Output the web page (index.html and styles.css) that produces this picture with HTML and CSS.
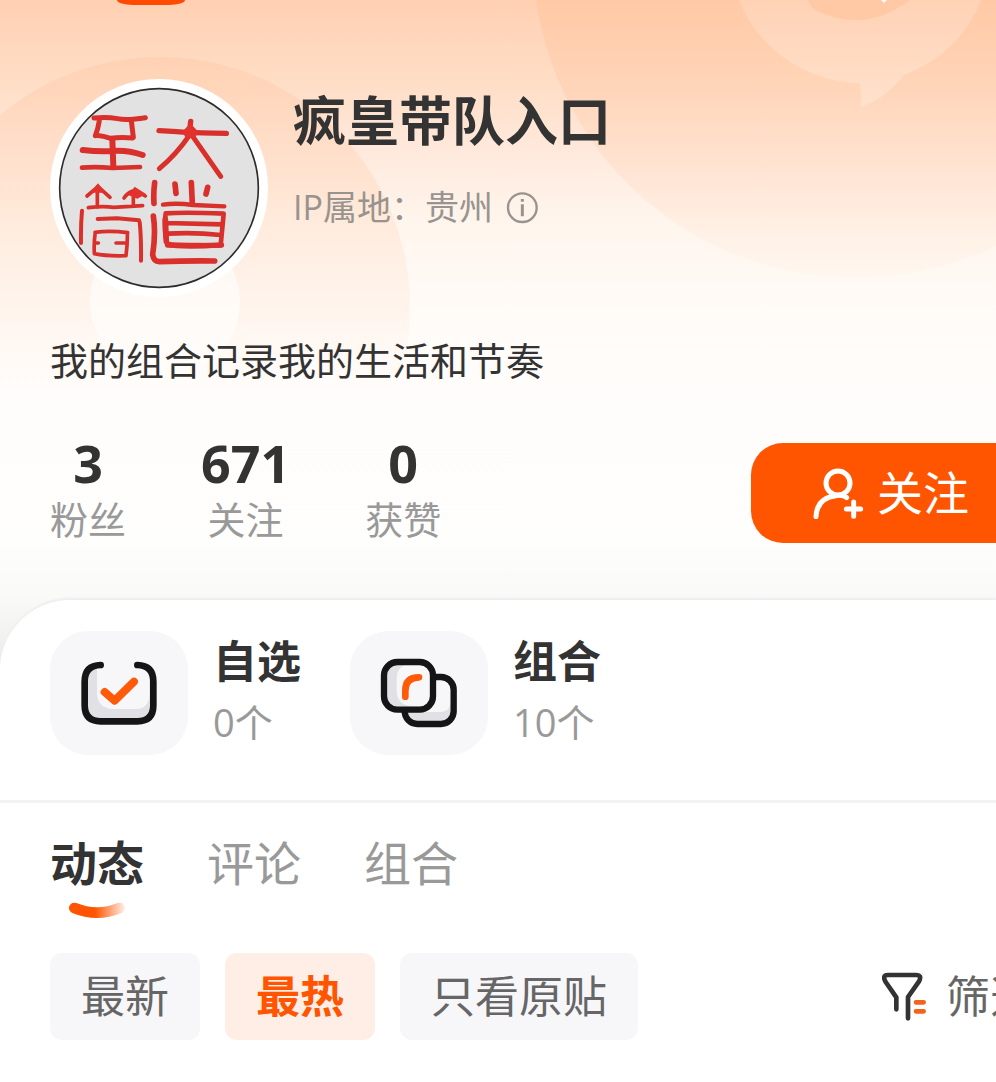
FILE: index.html
```html
<!DOCTYPE html>
<html lang="zh-CN">
<head>
<meta charset="utf-8">
<meta name="viewport" content="width=device-width, initial-scale=1">
<title>疯皇带队入口</title>
<link rel="stylesheet" href="styles.css">
</head>
<body>
<main class="page">
  <header class="hero">
    <svg class="art art-left" width="420" height="600" viewBox="0 0 420 600" aria-hidden="true">
      <defs>
        <linearGradient id="ring" gradientUnits="userSpaceOnUse" x1="0" y1="57" x2="0" y2="400">
          <stop offset="0" stop-color="#ffcbaa" stop-opacity=".55"/>
          <stop offset=".4" stop-color="#ffd6ba" stop-opacity=".4"/>
          <stop offset=".75" stop-color="#ffe6d6" stop-opacity=".3"/>
          <stop offset="1" stop-color="#fff3ea" stop-opacity="0"/>
        </linearGradient>
      </defs>
      <path fill="url(#ring)" fill-rule="evenodd" d="M160 57a250 250 0 1 1 0 500a250 250 0 1 1 0-500zM165 227a75 75 0 1 0 0 150a75 75 0 1 0 0-150z"/>
    </svg>
    <svg class="art art-right" width="460" height="300" viewBox="536 0 460 300" aria-hidden="true">
      <defs>
        <linearGradient id="disc" gradientUnits="userSpaceOnUse" x1="0" y1="0" x2="0" y2="280">
          <stop offset="0" stop-color="#ffc9a5"/>
          <stop offset=".32" stop-color="#ffd5b9"/>
          <stop offset=".64" stop-color="#ffe6d6"/>
          <stop offset=".86" stop-color="#fff2e7"/>
          <stop offset="1" stop-color="#fff7f0"/>
        </linearGradient>
        <linearGradient id="bubble" gradientUnits="userSpaceOnUse" x1="0" y1="0" x2="0" y2="107">
          <stop offset="0" stop-color="#ffd2b5"/>
          <stop offset="1" stop-color="#ffe1cc"/>
        </linearGradient>
      </defs>
      <circle cx="856" cy="-45" r="323" fill="url(#disc)"/>
      <path fill="url(#bubble)" d="M739 0C756 45 803 82 859 83q2 1 2 24q25-9 43-32q57-22 77-75z"/>
      <path fill="#ffc9a5" d="M808 0q3 8 7 10q19 10 41 10q27 0 54-20z"/>
      <path fill="#fff" d="M881 0h6l-3 3z"/>
    </svg>
    <div class="badge"></div>
    <section class="profile">
      <svg class="avatar" viewBox="30 27 654 654" role="img" aria-label="头像">
        <circle cx="357" cy="354" r="327" fill="#fff"/>
        <circle cx="357" cy="354" r="298" fill="#e2e2e2" stroke="#2d2b2c" stroke-width="5"/>
        <g fill="none" stroke="#d9302c" stroke-linecap="round" stroke-linejoin="round">
          <path stroke-width="15" d="M162 144q40-4 70 2t84-3M178 152q-4 26-12 45M169 196q22 2 43 9q32-5 66-1M274 152l6 50"/>
          <path stroke-width="18" d="M217 208l3 82M128 240q50 6 92 3t88 12"/>
          <path stroke-width="14" d="M126 293q40-4 92 1l82-3"/>
          <path stroke-width="16" d="M357 182q60 4 88 5t114 3M452 154q-3 20-2 36"/>
          <path stroke-width="15" d="M448 196q-38 56-90 100M456 196l86 123"/>
          <path stroke-width="11" d="M172 350v62M174 350l-33 28M174 350l36 32M284 362q-20 4-32 22M286 362l30 16M280 362v44M145 413q44-6 76-1l87-5"/>
          <path stroke-width="12" d="M126 422q-4 45-3 97M173 447l58-2l66 6M299 456q5 46 4 116"/>
          <path stroke-width="11" d="M165 487q45-6 98 1M166 487q-5 30-3 64q38 8 95 6q5-38 4-69M165 519h10M228 519h30"/>
          <path stroke-width="17" d="M344 338q-4 30-2 62M340 438q8 50-2 116q3 21 20 21q80-3 166-2"/>
          <path stroke-width="17" d="M405 342l3 28M454 338l3 64M503 352l-5 20"/>
          <path stroke-width="13" d="M369 404q40-6 90 1l94 4"/>
          <path stroke-width="14" d="M377 430q60-4 174 1l-9 95q-86-2-160 0q-12-45-5-96M380 459l164 4M382 491q80-5 160 4"/>
          <path stroke-width="17" d="M384 523q34 8 160 2M376 448l3 66"/>
        </g>
        <path fill="#e3312b" d="M451 160l24 25l-10 18h-28l-10-18zM174 340l22 28h-44zM284 350l34 22-26 14-26-10z"/>
      </svg>
      <div class="identity">
        <h1 class="name">疯皇带队入口</h1>
        <p class="location">IP属地：贵州
          <svg class="info" viewBox="678 336 99 99" fill="none" stroke="#999390" role="img" aria-label="说明">
            <circle cx="727" cy="386" r="43" stroke-width="7"/>
            <path stroke-width="9" d="M727 376v36M727 360v8"/>
          </svg>
        </p>
      </div>
    </section>
    <p class="bio">我的组合记录我的生活和节奏</p>
    <section class="summary">
      <dl class="stats">
        <div class="stat"><dt>粉丝</dt><dd>3</dd></div>
        <div class="stat"><dt>关注</dt><dd>671</dd></div>
        <div class="stat"><dt>获赞</dt><dd>0</dd></div>
      </dl>
      <button class="follow" type="button">
        <svg class="follow-icon" viewBox="246 108 156 156" fill="none" stroke="#fff" stroke-width="15" stroke-linecap="round" aria-hidden="true">
          <circle cx="324" cy="156" r="36"/>
          <path d="M258 257q3-57 60-63q21-4 32 6M349 234h43M371 213v43"/>
        </svg>
        <span class="label">关注</span>
      </button>
    </section>
  </header>

  <section class="sheet">
    <div class="lists">
      <a class="list" href="#watch">
        <span class="tile">
          <svg width="78" height="66" viewBox="240 240 234 198" fill="none" stroke-linecap="round" stroke-linejoin="round" aria-hidden="true">
            <rect x="256" y="256" width="204" height="168" rx="42" fill="#e1e1e5"/>
            <path fill="#f7f7fa" d="M291 240h157v107q-3 40-42 40h-70q-45-5-45-48z"/>
            <path stroke="#151515" stroke-width="20" d="M302 255q-48 1-48 50v71q0 48 48 48h110q48 0 48-48v-71q0-49-48-50"/>
            <path stroke="#ff5a08" stroke-width="24" d="M314 336l30 26l58-57"/>
          </svg>
        </span>
        <span class="list-text"><strong>自选</strong><small>0个</small></span>
      </a>
      <a class="list" href="#portfolio">
        <span class="tile">
          <svg width="78" height="70" viewBox="150 174 234 210" fill="none" stroke-linecap="round" aria-hidden="true">
            <rect x="224" y="231" width="147" height="141" rx="38" fill="#e1e1e5"/>
            <path fill="#f7f7fa" d="M300 231h35q28 0 28 32v38q0 35-35 35h-55z"/>
            <rect x="224" y="231" width="147" height="141" rx="38" stroke="#151515" stroke-width="19"/>
            <rect x="162" y="186" width="147" height="143" rx="40" fill="#e1e1e5"/>
            <path fill="#f7f7fa" d="M240 190h30q30 0 30 36v92h-55q-45-3-45-48v-38q3-36 40-42z"/>
            <rect x="162" y="186" width="147" height="143" rx="40" stroke="#151515" stroke-width="19"/>
            <path stroke="#ff5a08" stroke-width="20" d="M226 290v-18q0-40 41-40"/>
          </svg>
        </span>
        <span class="list-text"><strong>组合</strong><small>10个</small></span>
      </a>
    </div>

    <nav class="tabs">
      <a class="tab tab-active" href="#feed">动态
        <svg class="smile" viewBox="114 246 174 51" fill="none" aria-hidden="true">
          <defs>
            <linearGradient id="fade" gradientUnits="userSpaceOnUse" x1="195" y1="0" x2="286" y2="0">
              <stop offset="0" stop-color="#ff5500"/>
              <stop offset="1" stop-color="#ff5500" stop-opacity=".08"/>
            </linearGradient>
          </defs>
          <path stroke="url(#fade)" stroke-width="32" stroke-linecap="round" d="M133 264q68 28 136 0"/>
        </svg>
      </a>
      <a class="tab" href="#comments">评论</a>
      <a class="tab" href="#groups">组合</a>
    </nav>

    <div class="filters">
      <button class="chip" type="button"><span class="label">最新</span></button>
      <button class="chip chip-active" type="button"><span class="label">最热</span></button>
      <button class="chip" type="button"><span class="label">只看原贴</span></button>
      <button class="filter" type="button">
        <svg class="filter-icon" viewBox="96 96 135 147" fill="none" stroke-linecap="round" stroke-linejoin="round" aria-hidden="true">
          <path stroke="#333" stroke-width="14" d="M139 208v-36l-32-46q-12-21 7-21h84q19 0 9 19l-33 47v64"/>
          <path stroke="#f26419" stroke-width="14" d="M198 187h23M198 214h23"/>
        </svg>
        <span class="label">筛选</span>
      </button>
    </div>
  </section>
</main>
</body>
</html>
```
FILE: styles.css
```css
* {
  box-sizing: border-box;
}

body,
h1,
p,
dl,
dd {
  margin: 0;
}

body {
  background: #fff;
  color: #333;
  font-family: "Open Sans", "Noto Sans CJK SC", sans-serif;
}

button {
  border: 0;
  font-family: inherit;
  white-space: nowrap;
  cursor: pointer;
}

a {
  color: inherit;
  text-decoration: none;
}

.page {
  min-height: 100vh;
  overflow: hidden;
}

.hero {
  position: relative;
  padding: 0 0 193px 50px;
  background:
    linear-gradient(to top, rgba(0, 0, 0, .08), rgba(0, 0, 0, .02) 70px, transparent 130px),
    linear-gradient(#ffd0b2 0, #ffddc5 80px, #ffe9dc 150px, #fff5ec 220px, #fffaf6 290px, #fffdfb 400px, #fefefd 560px);
}

.art {
  position: absolute;
  top: 0;
}

.art-left {
  left: 0;
}

.art-right {
  right: 0;
}

.badge {
  width: 68px;
  height: 5px;
  margin-left: 67px;
  border-radius: 0 0 16px 16px / 0 0 5px 5px;
  background: #ff4a00;
}

.profile {
  position: relative;
  display: flex;
  gap: 25px;
  margin-top: 74px;
}

.avatar {
  flex: none;
  width: 218px;
  height: 218px;
}

.identity {
  padding-top: 10px;
}

.name {
  font-size: 53px;
  font-weight: 700;
  line-height: 64px;
}

.location {
  display: flex;
  align-items: center;
  gap: 13px;
  margin-top: 30px;
  color: #999390;
  font-size: 34px;
  line-height: 48px;
}

.info {
  width: 33px;
  height: 33px;
}

.bio {
  position: relative;
  margin-top: 35px;
  font-size: 38px;
  line-height: 56px;
}

.summary {
  position: relative;
  display: flex;
  justify-content: space-between;
  margin-top: 49px;
  height: 40px;
}

.stats {
  display: flex;
  gap: 75px;
}

.stat {
  display: flex;
  flex-direction: column-reverse;
  justify-content: flex-end;
  gap: 10px;
  text-align: center;
}

.stat dt {
  color: #999;
  font-size: 38px;
  line-height: 40px;
}

.stat dd {
  font-size: 52px;
  font-weight: 700;
  line-height: 52px;
}

.follow {
  display: flex;
  align-items: center;
  gap: 13px;
  height: 100px;
  margin-top: 6px;
  padding: 0 27px 0 61px;
  border-radius: 32px 0 0 32px;
  background: #ff5500;
  color: #fff;
  font-size: 46px;
}

.label {
  display: block;
  padding-bottom: 6px;
}

.follow-icon {
  width: 52px;
  height: 52px;
}

.sheet {
  position: relative;
  margin-top: -70px;
  border-radius: 70px 0 0 0;
  background: #fff;
  box-shadow: 0 -2px 2px #eee;
}

.lists {
  display: flex;
  gap: 49px;
  padding: 31px 50px 45px;
  border-bottom: 3px solid #f3f3f3;
}

.list {
  display: flex;
  gap: 25px;
}

.tile {
  display: grid;
  place-items: center;
  width: 138px;
  height: 124px;
  border-radius: 38px;
  background: #f7f7fa;
}

.list-text {
  display: flex;
  flex-direction: column;
  gap: 13px;
  padding-top: 4px;
}

.list-text strong {
  font-size: 44px;
  line-height: 52px;
}

.list-text small {
  color: #999;
  font-size: 38px;
  line-height: 44px;
}

.tabs {
  display: flex;
  gap: 63px;
  padding: 32px 50px 0;
}

.tab {
  color: #999;
  font-size: 47px;
  line-height: 56px;
}

.tab-active {
  display: flex;
  flex-direction: column;
  align-items: center;
  gap: 11px;
  color: #333;
  font-weight: 700;
}

.smile {
  width: 58px;
  height: 17px;
}

.filters {
  display: flex;
  gap: 25px;
  padding: 34px 0 42px 50px;
}

.chip {
  height: 87px;
  padding: 0 31px;
  border-radius: 12px;
  background: #f7f7fa;
  color: #666;
  font-size: 44px;
}

.chip-active {
  background: #ffeee6;
  color: #ff5500;
  font-weight: 700;
}

.filter {
  display: flex;
  align-items: center;
  gap: 19px;
  margin: 0 -38px 0 auto;
  padding: 0;
  background: none;
  color: #666;
  font-size: 44px;
}

.filter-icon {
  width: 45px;
  height: 49px;
}
```
